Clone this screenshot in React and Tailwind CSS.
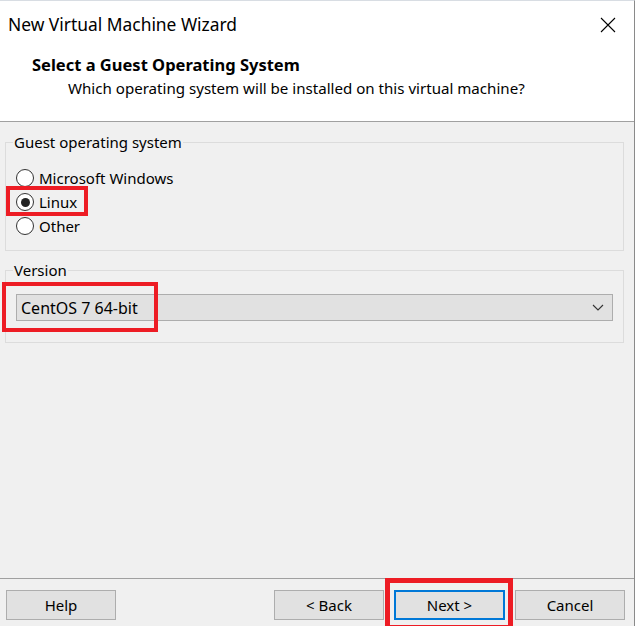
const font = { fontFamily: '"Noto Sans", "Open Sans", sans-serif' };

function Radio({ label, checked }) {
  return (
    <div className="flex h-[24px] items-center">
      <span className="flex h-[18px] w-[18px] items-center justify-center rounded-full border border-[#333] bg-white">
        {checked && <span className="h-[9px] w-[9px] rounded-full bg-[#222]" />}
      </span>
      <span className="ml-[5px] text-[15px] text-black">{label}</span>
    </div>
  );
}

function Button({ children, primary }) {
  return (
    <button
      className={
        primary
          ? "flex h-[30px] w-[111px] items-center justify-center border-2 border-[#0078d7] bg-[#e1e1e1] text-[15px] text-black"
          : "flex h-[30px] w-[110px] items-center justify-center border border-[#adadad] bg-[#e1e1e1] text-[15px] text-black"
      }
    >
      {children}
    </button>
  );
}

export default function App() {
  return (
    <div className="relative h-[626px] w-[637px] overflow-hidden bg-white" style={font}>
      <div className="flex h-[626px] w-[635px] flex-col border-r border-t border-r-[#8a8a8a] border-t-[#d8dde3] bg-[#f0f0f0]">
        {/* header */}
        <div className="h-[121px] border-b border-[#a0a0a0] bg-white">
          <div className="flex h-[47px] items-center justify-between pl-[8px] pr-[18px]">
            <span className="text-[17.4px] text-black">New Virtual Machine Wizard</span>
            <svg width="16" height="16" viewBox="0 0 16 16" className="text-black">
              <path d="M1 1 L15 15 M15 1 L1 15" stroke="currentColor" strokeWidth="1.1" fill="none" />
            </svg>
          </div>
          <div className="pl-[32px] pt-[7px] text-[16.5px] font-bold leading-[20px] text-black">
            Select a Guest Operating System
          </div>
          <div className="pl-[68px] pt-[3px] text-[15.1px] leading-[20px] text-black">
            Which operating system will be installed on this virtual machine?
          </div>
        </div>

        {/* body */}
        <div className="flex flex-1 flex-col px-[5px] pt-[11px]">
          <fieldset className="h-[118px] w-[619px] border border-[#dcdcdc]">
            <legend className="ml-[7px] px-[1px] text-[15px] leading-[18px] text-black">Guest operating system</legend>
            <div className="mt-[15px] flex flex-col pl-[10px]">
              <Radio label="Microsoft Windows" />
              <Radio label="Linux" checked />
              <Radio label="Other" />
            </div>
          </fieldset>

          <fieldset className="mt-[10px] h-[82px] w-[619px] border border-[#dcdcdc]">
            <legend className="ml-[7px] px-[1px] text-[15px] leading-[18px] text-black">Version</legend>
            <div className="ml-[10px] mt-[15px] flex h-[27px] w-[597px] items-center justify-between border border-[#adadad] bg-[#e1e1e1] pl-[4px] pr-[8px]">
              <span className="text-[16px] text-black">CentOS 7 64-bit</span>
              <svg width="12" height="7" viewBox="0 0 12 7">
                <path d="M1 1 L6 6 L11 1" stroke="#333" strokeWidth="1.1" fill="none" />
              </svg>
            </div>
          </fieldset>
        </div>

        {/* footer */}
        <div className="h-[48px] border-t border-[#a0a0a0]">
          <div className="flex items-center pl-[6px] pr-[9px] pt-[11px]">
            <Button>Help</Button>
            <div className="flex-1" />
            <div className="flex gap-[10px]">
              <Button>&lt; Back</Button>
              <Button primary>Next &gt;</Button>
              <Button>Cancel</Button>
            </div>
          </div>
        </div>
      </div>

      {/* red annotation boxes */}
      <div className="absolute left-[6px] top-[186px] h-[30px] w-[82px] border-4 border-[#ed1c24]" />
      <div className="absolute left-[2px] top-[282px] h-[50px] w-[156px] border-4 border-[#ed1c24]" />
      <div className="absolute left-[385px] top-[578px] h-[52px] w-[128px] border-[5px] border-[#ed1c24]" />
    </div>
  );
}
